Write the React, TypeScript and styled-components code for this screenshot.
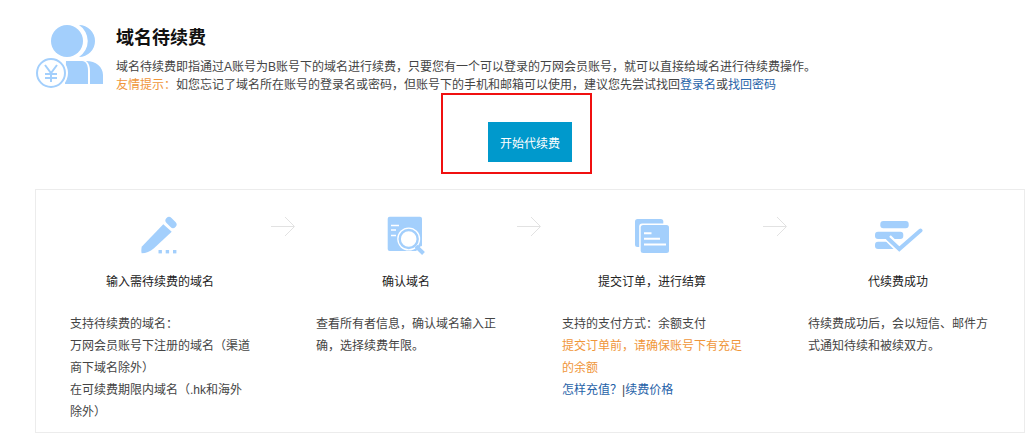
import React from 'react';
import styled, { createGlobalStyle } from 'styled-components';

const ICON = '#a3cffc';

const GlobalStyle = createGlobalStyle`
  html, body { margin: 0; padding: 0; background: #fff; }
  body {
    font-family: "Liberation Sans", "Noto Sans CJK SC", sans-serif;
    font-size: 12px;
    color: #444;
  }
`;

const Page = styled.div`
  width: 1030px;
  height: 438px;
  overflow: hidden;
`;

const Intro = styled.header`
  display: flex;
  height: 122px;
  padding: 24px 0 0 34px;
  box-sizing: border-box;
`;

const IntroIcon = styled.svg`
  width: 72px;
  height: 66px;
  flex: none;
`;

const IntroBody = styled.div`
  margin-left: 10px;
  padding-top: 1px;
`;

const Title = styled.h1`
  margin: 0;
  font-size: 18px;
  line-height: 26px;
  font-weight: 700;
  color: #111;
`;

const IntroText = styled.p`
  margin: 0;
  line-height: 18px;
  &:first-of-type { margin-top: 7px; }
`;

const Orange = styled.span`
  color: #f0963a;
`;

const TextLink = styled.a`
  color: #1f62a8;
  text-decoration: none;
`;

const ButtonRow = styled.div`
  position: relative;
  display: flex;
  justify-content: center;
  width: 1060px;
  height: 67px;
`;

const StartButton = styled.button`
  width: 84px;
  height: 40px;
  border: 0;
  padding: 0;
  background: #0099cc;
  color: #fff;
  font: inherit;
`;

const RedFrame = styled.div`
  position: absolute;
  left: 441px;
  top: -29px;
  width: 147px;
  height: 77px;
  border: 2px solid #f01010;
`;

const Panel = styled.section`
  display: flex;
  width: 990px;
  height: 244px;
  margin-left: 35px;
  box-sizing: border-box;
  border: 1px solid #ececec;
`;

const Step = styled.div`
  position: relative;
  width: 246px;
  padding: 26px 0 0 34px;
  box-sizing: border-box;
`;

const Arrow = styled.svg`
  position: absolute;
  left: 235px;
  top: 26px;
  width: 24px;
  height: 22px;
`;

const StepIcon = styled.div`
  display: flex;
  justify-content: center;
  width: 180px;
  height: 40px;
`;

const StepTitle = styled.h2`
  width: 180px;
  margin: 17px 0 0;
  font-size: 12px;
  line-height: 18px;
  font-weight: 400;
  text-align: center;
  color: #222;
`;

const StepText = styled.div`
  width: 180px;
  margin-top: 22px;
  line-height: 22px;
`;

const ArrowIcon = () => (
  <Arrow viewBox="0 0 24 22" fill="none" stroke="#e2e2e2" strokeWidth="1">
    <path d="M0 10.5H23M14 1l9.500 9.500L14 20" />
  </Arrow>
);

const PersonIcon = () => (
  <IntroIcon viewBox="34 24 72 66">
    <path d="M79 25a16 16 0 0 1 0 32a19 19 0 0 0 0-32z" fill={ICON} />
    <circle cx="67" cy="41" r="18" fill="#fff" />
    <circle cx="67" cy="41" r="16" fill={ICON} />
    <path d="M66 61h16c4 0 6 4 6 10v13H65z" fill={ICON} />
    <path d="M86 61c10 0 17 6 17 14v9h-13V71c0-4-1-8-4-10z" fill={ICON} />
    <circle cx="51" cy="73" r="17" fill="#fff" />
    <circle cx="51" cy="73" r="14" fill="#fff" stroke={ICON} strokeWidth="2" />
    <path d="M45 65l6 8 6-8M51 73v9M45 74h12M45 78h12" fill="none" stroke={ICON} strokeWidth="2" />
  </IntroIcon>
);

const PenIcon = () => (
  <svg width="40" height="40" viewBox="0 0 40 40">
    <path d="M23.300 8.300L31.700 15.700L14 32.300C10 35.500 6 37.300 1.700 37.300C1.200 36 1.200 33.500 1.700 30.700z" fill={ICON} />
    <path d="M29 4.500L33 8.500" stroke={ICON} strokeWidth="7" strokeLinecap="round" />
    <rect x="18.500" y="34" width="3.400" height="3.400" fill={ICON} />
    <rect x="25.700" y="34" width="3.400" height="3.400" fill={ICON} />
    <rect x="33" y="34" width="3.400" height="3.400" fill={ICON} />
  </svg>
);

const SearchIcon = () => (
  <svg width="40" height="40" viewBox="0 0 40 40">
    <rect x="1.700" y="0.700" width="34.300" height="34.300" rx="2" fill={ICON} />
    <path d="M5 9.500H13M5 14H10M5 19.500H10" stroke="#fff" strokeWidth="1.600" />
    <path d="M32.700 32.300L38.500 38" stroke="#fff" strokeWidth="7" />
    <circle cx="22.700" cy="23" r="11.500" fill="#fff" />
    <circle cx="22.700" cy="23" r="9" fill="#fff" stroke={ICON} strokeWidth="2.400" />
    <path d="M30 30.300L37.500 37.500" stroke={ICON} strokeWidth="4" />
  </svg>
);

const DocsIcon = () => (
  <svg width="40" height="40" viewBox="0 0 40 40">
    <rect x="3" y="3" width="28.300" height="28" rx="2.500" fill={ICON} />
    <rect x="7.200" y="7.500" width="31.300" height="30.700" rx="3" fill="#fff" />
    <rect x="8.700" y="9" width="28.300" height="28" rx="2.500" fill={ICON} />
    <path d="M12 17.200H19.500M12 22.700H28M12 28.500H34" stroke="#fff" strokeWidth="2" />
  </svg>
);

const CheckIcon = () => (
  <svg width="50" height="40" viewBox="0 0 50 40">
    <rect x="7.300" y="5" width="28.400" height="7.300" rx="3" fill={ICON} />
    <rect x="2" y="15.700" width="28.300" height="7.300" rx="3" fill={ICON} />
    <rect x="2" y="25.700" width="22.700" height="7.300" rx="3" fill={ICON} />
    <path d="M15 22L26.300 33L48 14" fill="none" stroke="#fff" strokeWidth="8" />
    <path d="M15 22.500L26.300 33L47.500 14.500" fill="none" stroke={ICON} strokeWidth="4" strokeLinecap="round" />
  </svg>
);

export default function App() {
  return (
    <Page>
      <GlobalStyle />
      <Intro>
        <PersonIcon />
        <IntroBody>
          <Title>域名待续费</Title>
          <IntroText>域名待续费即指通过A账号为B账号下的域名进行续费，只要您有一个可以登录的万网会员账号，就可以直接给域名进行待续费操作。</IntroText>
          <IntroText>
            <Orange>友情提示：</Orange>如您忘记了域名所在账号的登录名或密码，但账号下的手机和邮箱可以使用，建议您先尝试找回
            <TextLink href="#">登录名</TextLink>或<TextLink href="#">找回密码</TextLink>
          </IntroText>
        </IntroBody>
      </Intro>
      <ButtonRow>
        <StartButton>开始代续费</StartButton>
        <RedFrame />
      </ButtonRow>
      <Panel>
        <Step>
          <StepIcon><PenIcon /></StepIcon>
          <StepTitle>输入需待续费的域名</StepTitle>
          <StepText>
            支持待续费的域名：<br />
            万网会员账号下注册的域名（渠道商下域名除外）<br />
            在可续费期限内域名（.hk和海外除外）
          </StepText>
          <ArrowIcon />
        </Step>
        <Step>
          <StepIcon><SearchIcon /></StepIcon>
          <StepTitle>确认域名</StepTitle>
          <StepText>查看所有者信息，确认域名输入正确，选择续费年限。</StepText>
          <ArrowIcon />
        </Step>
        <Step>
          <StepIcon><DocsIcon /></StepIcon>
          <StepTitle>提交订单，进行结算</StepTitle>
          <StepText>
            支持的支付方式：余额支付<br />
            <Orange>提交订单前，请确保账号下有充足的余额</Orange><br />
            <TextLink href="#">怎样充值？</TextLink>|<TextLink href="#">续费价格</TextLink>
          </StepText>
          <ArrowIcon />
        </Step>
        <Step>
          <StepIcon><CheckIcon /></StepIcon>
          <StepTitle>代续费成功</StepTitle>
          <StepText>待续费成功后，会以短信、邮件方式通知待续和被续双方。</StepText>
        </Step>
      </Panel>
    </Page>
  );
}
